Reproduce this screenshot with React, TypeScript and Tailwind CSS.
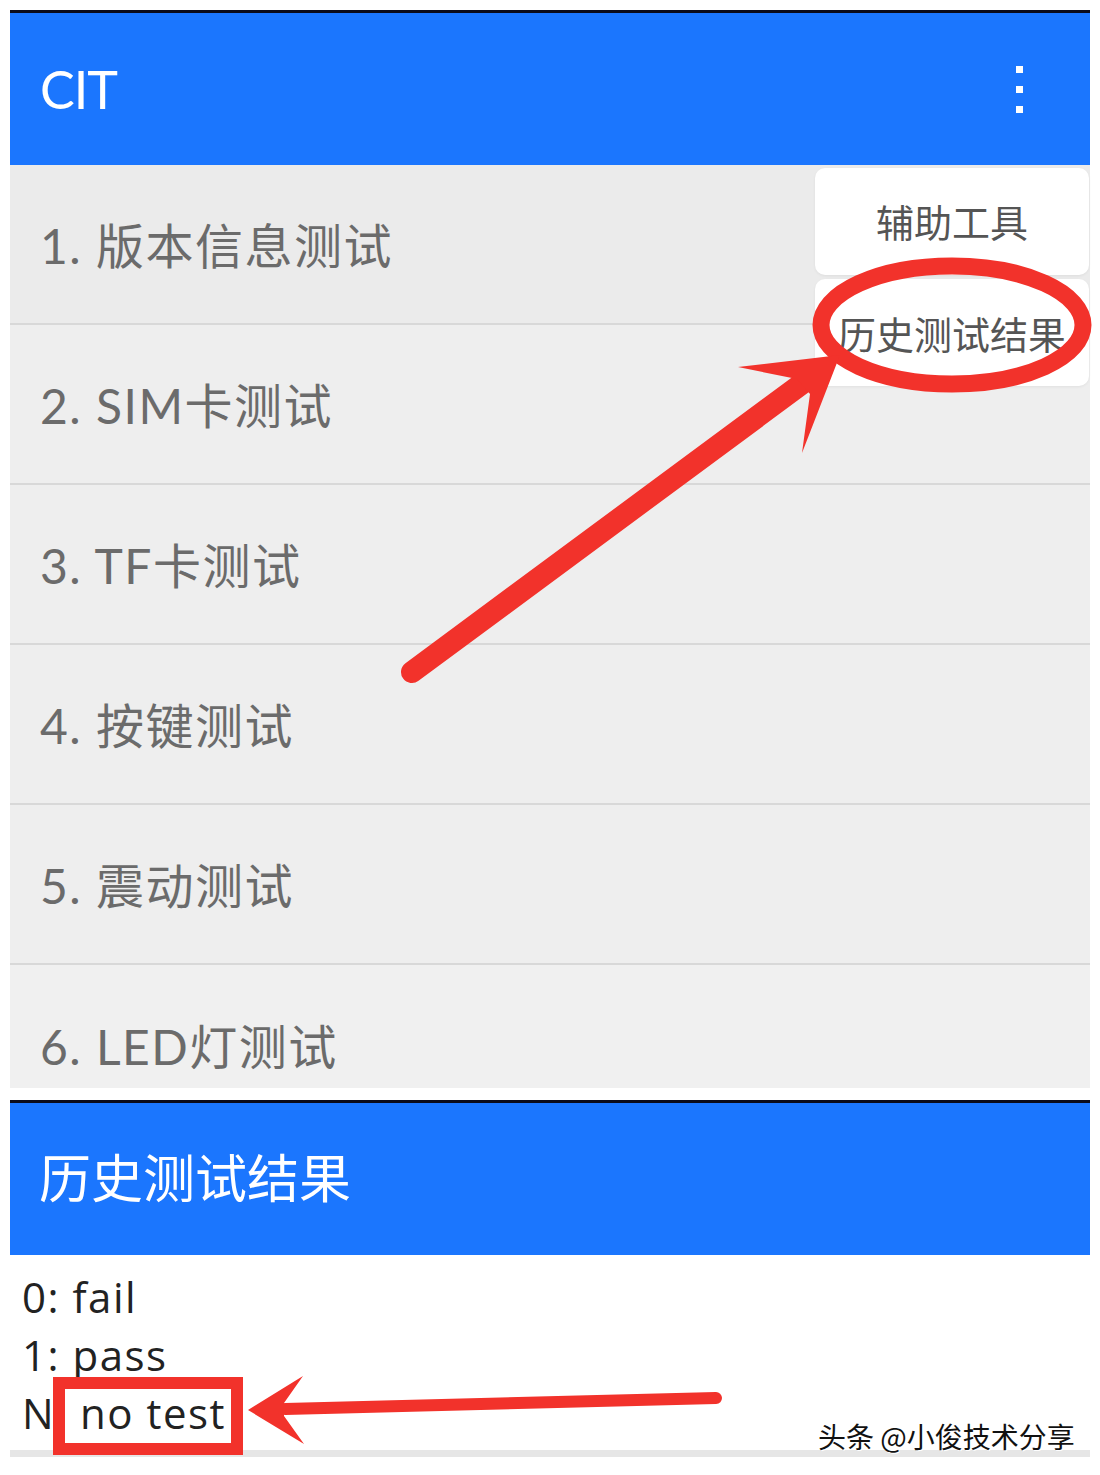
import React from "react";

const FONT = { fontFamily: 'Lato, "Noto Sans CJK SC", "Noto Sans", sans-serif' };

const rows = [
  "1. 版本信息测试",
  "2. SIM卡测试",
  "3. TF卡测试",
  "4. 按键测试",
  "5. 震动测试",
  "6. LED灯测试",
];

export default function App() {
  return (
    <div className="relative w-[1100px] h-[1475px] bg-white overflow-hidden" style={FONT}>
      <div className="flex flex-col px-[10px] pt-[10px]">
        {/* Top app bar */}
        <div className="h-[155px] bg-[#1b76fe] border-t-[3px] border-[#0b0b1a] flex items-center justify-between pl-[30px] pr-[67px]">
          <span className="text-white text-[52px] leading-none tracking-[-1px]">CIT</span>
          <div className="flex flex-col gap-[13px]">
            <span className="block w-[7px] h-[7px] bg-white" />
            <span className="block w-[7px] h-[7px] bg-white" />
            <span className="block w-[7px] h-[7px] bg-white" />
          </div>
        </div>

        {/* List */}
        <div className="flex flex-col bg-[#efefef]">
          {rows.map((r, i) => (
            <div
              key={r}
              className={
                i === 5
                  ? "h-[123px] flex items-center pl-[30px] pt-[40px] bg-[#f0f0f0]"
                  : i === 0
                  ? "h-[160px] flex items-center pl-[30px] pt-[3px] border-b-2 border-[#d8d8d8] bg-[#ebebeb]"
                  : "h-[160px] flex items-center pl-[30px] pt-[3px] border-b-2 border-[#d8d8d8] bg-[#eeeeee]"
              }
            >
              <span className="text-[#6b6b6b] text-[48px] leading-none tracking-[1.5px]">{r}</span>
            </div>
          ))}
        </div>

        <div className="h-[12px]" />

        {/* Dialog header */}
        <div className="h-[155px] bg-[#1b76fe] border-t-[3px] border-[#0b0b1a] flex items-center pl-[29px] pb-[2px]">
          <span className="text-white text-[52px] leading-none">历史测试结果</span>
        </div>

        {/* Dialog content */}
        <div
          className="h-[195px] bg-white flex flex-col pt-[13px] pl-[12px] text-[#222222] text-[42px] leading-[58px] tracking-[1.5px]"
          style={{ fontFamily: '"Open Sans", "Noto Sans", sans-serif' }}
        >
          <span>0: fail</span>
          <span>1: pass</span>
          <span>N: no test</span>
        </div>
        <div className="h-[7px] bg-[#e6e6e6]" />
      </div>

      {/* Overflow menu */}
      <div className="absolute left-[815px] top-[168px] w-[274px] flex flex-col gap-[4px]">
        <div className="h-[107px] bg-white rounded-[10px] flex items-center justify-center shadow-[0_1px_3px_rgba(0,0,0,0.06)]">
          <span className="text-[#555555] text-[38px] leading-none">辅助工具</span>
        </div>
        <div className="h-[107px] bg-white rounded-[10px] flex items-center justify-center shadow-[0_1px_3px_rgba(0,0,0,0.06)] pt-[2px]">
          <span className="text-[#555555] text-[38px] leading-none">历史测试结果</span>
        </div>
      </div>

      {/* Watermark */}
      <div
        className="absolute left-[818px] top-[1422px] text-[28px] leading-none text-[#111111] [text-shadow:1px_1px_0_#ffffff,-1px_-1px_0_#ffffff]"
        style={{ fontFamily: '"Noto Sans CJK SC", "Noto Sans", sans-serif' }}
      >
        头条 @小俊技术分享
      </div>

      {/* Red annotations */}
      <svg
        className="absolute left-0 top-0 pointer-events-none"
        width="1100"
        height="1475"
        viewBox="0 0 1100 1475"
      >
        <ellipse cx="952" cy="325" rx="131" ry="59" fill="none" stroke="#f2322b" strokeWidth="17" />
        <line x1="412" y1="672" x2="815" y2="374" stroke="#f2322b" strokeWidth="22" strokeLinecap="round" />
        <polygon points="840,355 738,367 797,379 810,394 802,453" fill="#f2322b" />

        <rect x="59" y="1383" width="178" height="66" fill="none" stroke="#f2322b" strokeWidth="12" />
        <line x1="716" y1="1398" x2="285" y2="1409" stroke="#f2322b" strokeWidth="12" strokeLinecap="round" />
        <polygon points="248,1410 303,1376 284,1403 284,1416 304,1444" fill="#f2322b" />
      </svg>
    </div>
  );
}
